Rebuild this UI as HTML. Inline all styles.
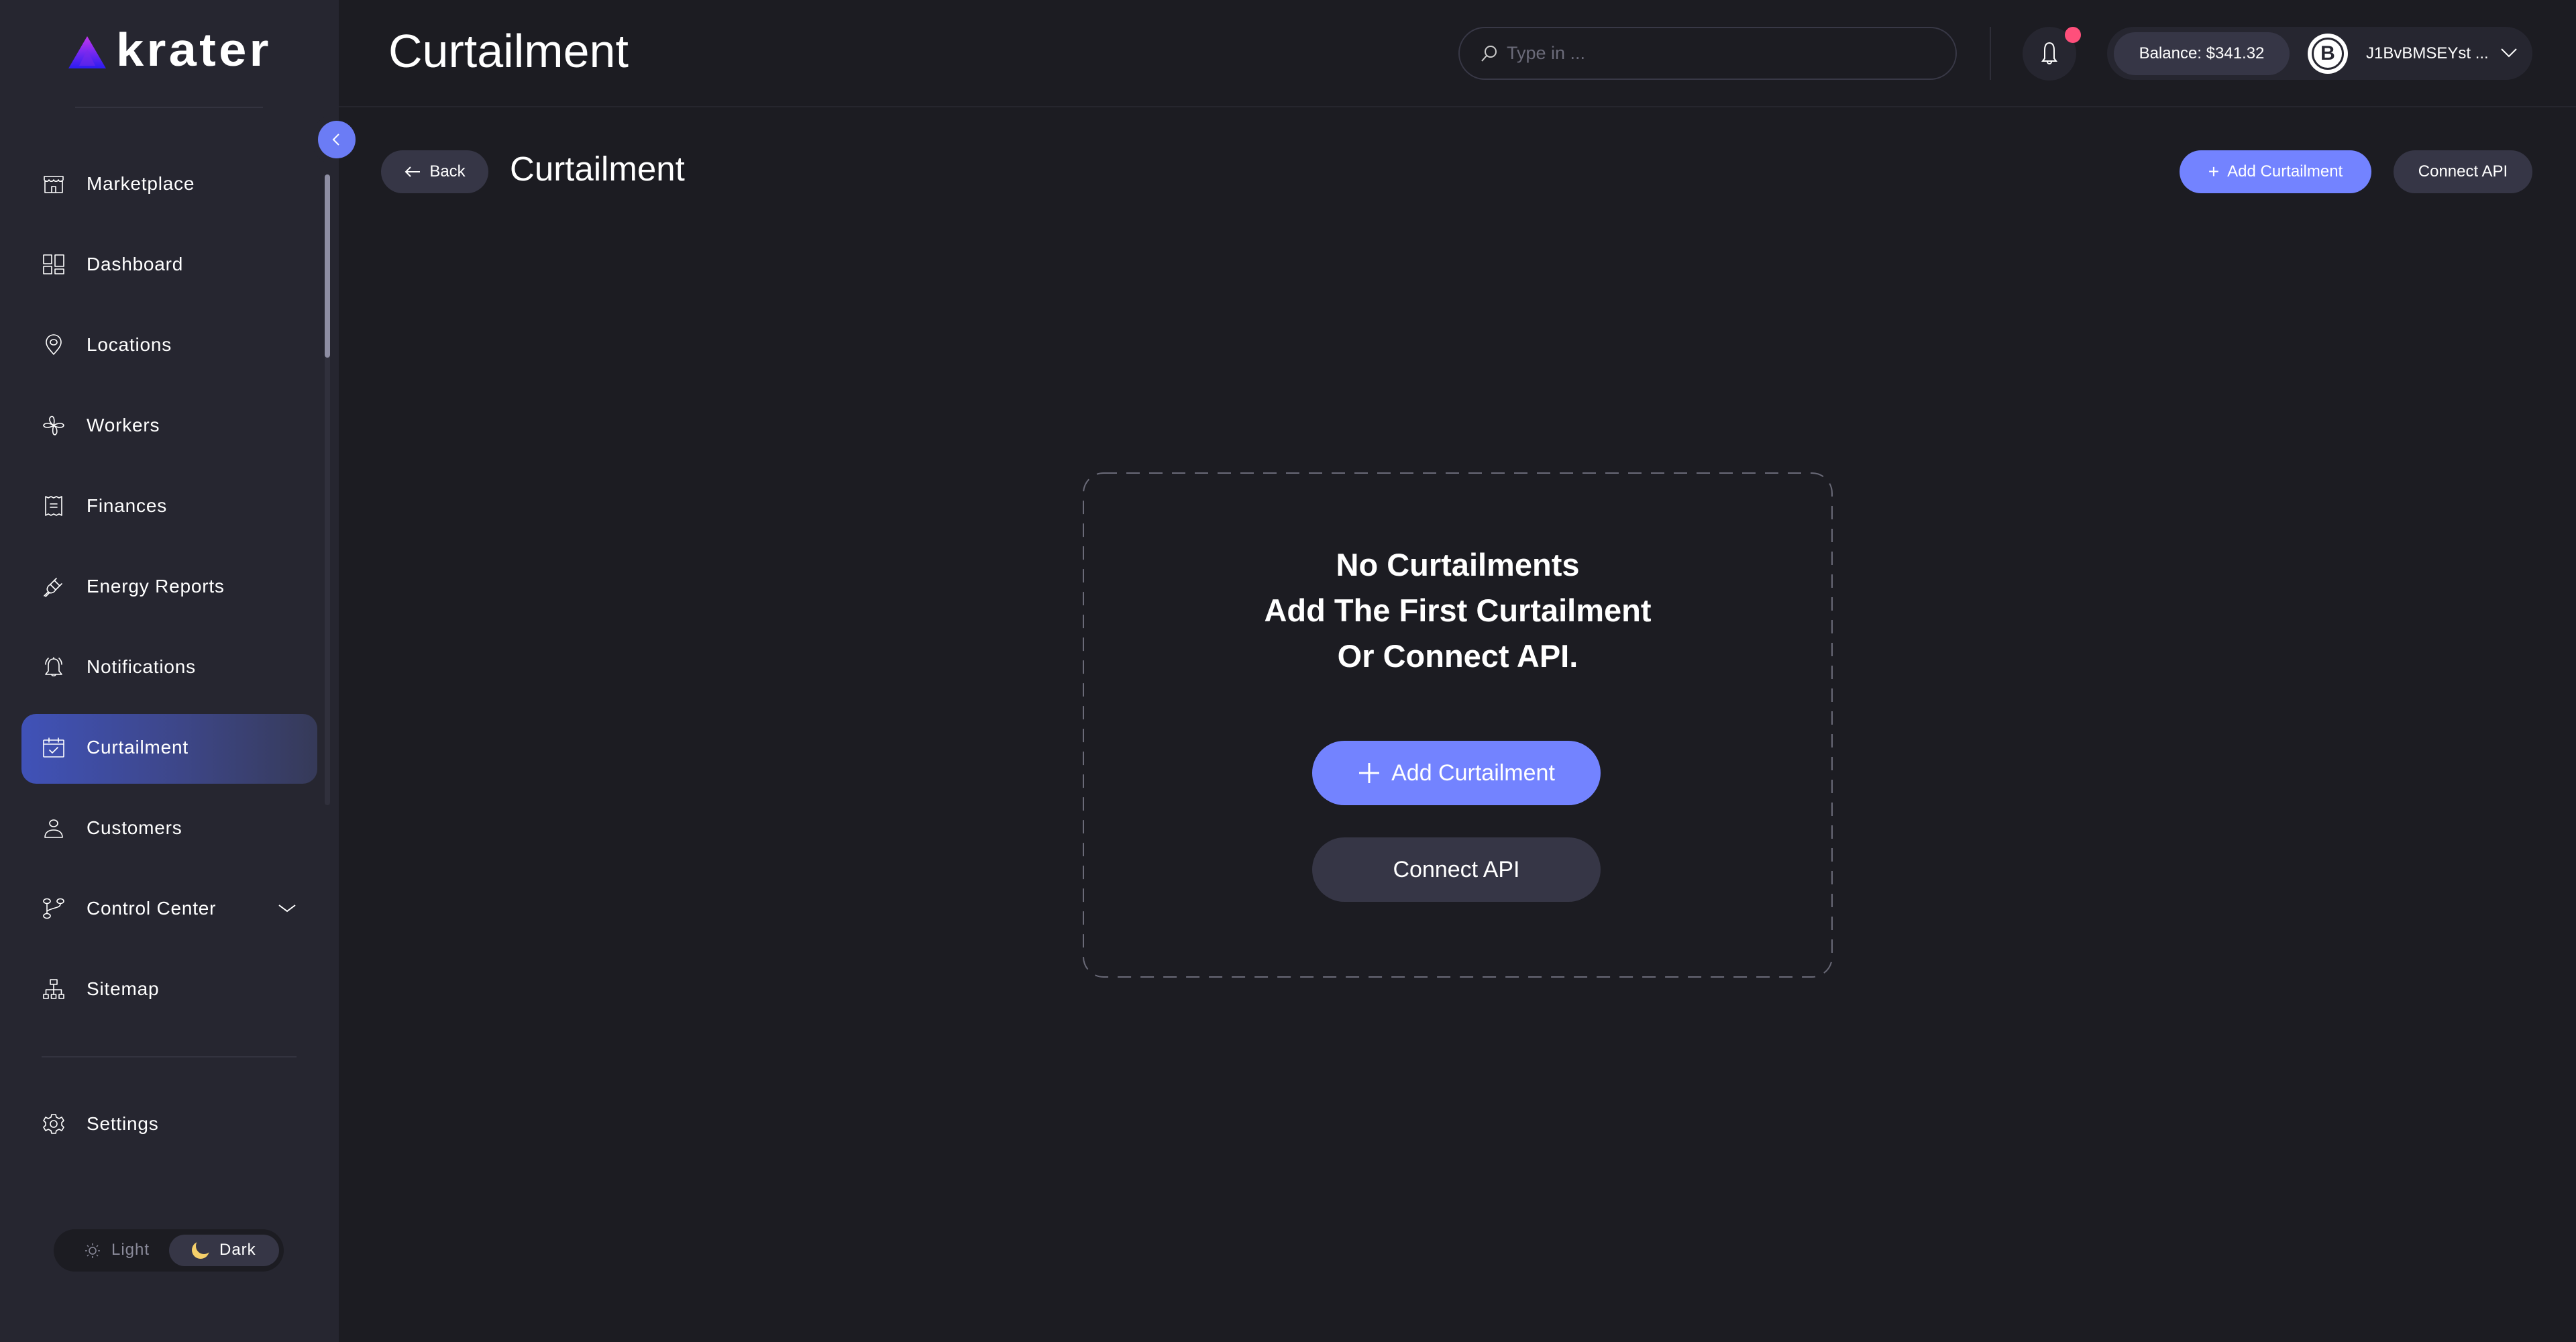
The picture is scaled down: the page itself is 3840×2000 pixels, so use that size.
<!DOCTYPE html>
<html><head><meta charset="utf-8"><style>
*{margin:0;padding:0;box-sizing:border-box}
body{width:3840px;height:2000px;background:#1c1c22;font-family:"Liberation Sans",sans-serif;color:#fff;position:relative;overflow:hidden}
.abs{position:absolute}
#side{left:0;top:0;width:505px;height:2000px;background:#262630}
.nav{position:absolute;left:64px;height:40px;display:flex;align-items:center;font-size:28px;letter-spacing:0.8px}
.nav svg{width:32px;height:32px;margin-right:33px;fill:none;stroke:#fff;stroke-width:1.6;stroke-linecap:round;stroke-linejoin:round}
.pill{position:absolute;border-radius:999px;display:flex;align-items:center;justify-content:center}
</style></head><body>
<div id="side" class="abs"></div>
<!-- logo -->
<svg class="abs" style="left:102px;top:54px" width="56" height="48" viewBox="0 0 56 48">
<defs><linearGradient id="lg" x1="0" y1="0" x2="0" y2="1"><stop offset="0" stop-color="#c436f0"/><stop offset="1" stop-color="#2a1cf0"/></linearGradient></defs>
<polygon points="28,0 56,48 0,48" fill="url(#lg)"/><polygon points="28,20 40,44 16,44" fill="#7a2ae8" opacity=".5"/></svg>
<div class="abs" style="left:173px;top:34px;font-size:70px;font-weight:bold;letter-spacing:4px;line-height:80px;transform:scaleX(1.06);transform-origin:left">krater</div>
<div class="abs" style="left:112px;top:159px;width:280px;height:2px;background:#33333f"></div>
<!-- scrollbar -->
<div class="abs" style="left:484px;top:260px;width:8px;height:940px;background:#30303c;border-radius:4px"></div>
<div class="abs" style="left:484px;top:260px;width:8px;height:273px;background:#8e8ea3;border-radius:4px"></div>
<!-- collapse -->
<div class="abs" style="left:464px;top:170px;width:76px;height:76px;border-radius:50%;background:#262630"></div>
<div class="abs" style="left:505px;top:159px;width:60px;height:100px;background:#1c1c22"></div>
<div class="abs" style="left:474px;top:180px;width:56px;height:56px;border-radius:50%;background:#6b7cf5"></div>
<svg class="abs" style="left:490px;top:196px" width="24" height="24" viewBox="0 0 24 24"><path d="M15 4 L7 12 L15 20" stroke="#fff" stroke-width="2" fill="none"/></svg>
<!-- active -->
<div class="abs" style="left:32px;top:1064px;width:441px;height:104px;border-radius:22px;background:linear-gradient(90deg,#4052b8,#3d4687 55%,#363a58)"></div>

<div class="nav" style="top:254px"><svg viewBox="0 0 32 32"><path d="M3 12V29H29V12M2 5H30V10C28 13 24 13 23 10C22 13 17 13 16 10C15 13 10 13 9 10C8 13 4 13 2 10ZM13 29V20H19V29"/></svg>Marketplace</div>
<div class="nav" style="top:374px"><svg viewBox="0 0 32 32"><rect x="1" y="2" width="12" height="13"/><rect x="18" y="2" width="13" height="17"/><rect x="1" y="19" width="12" height="11"/><rect x="18" y="23" width="13" height="7"/></svg>Dashboard</div>
<div class="nav" style="top:494px"><svg viewBox="0 0 32 32"><path d="M16 30C10 23 5 18 5 12A11 11 0 0 1 27 12C27 18 22 23 16 30Z"/><ellipse cx="16" cy="12" rx="5" ry="4"/></svg>Locations</div>
<div class="nav" style="top:614px"><svg viewBox="0 0 32 32"><path d="M16 16C10 12 8 6 12 3C16 1 18 7 16 16ZM16 16C22 12 30 12 31 16C30 20 22 20 16 16ZM16 16C22 20 22 28 18 30C14 30 14 22 16 16ZM16 16C10 20 2 20 1 16C2 12 10 12 16 16Z"/></svg>Workers</div>
<div class="nav" style="top:734px"><svg viewBox="0 0 32 32"><path d="M4 2L8 4L12 2L16 4L20 2L24 4L28 2V30L24 28L20 30L16 28L12 30L8 28L4 30ZM11 13H21M11 18H21"/></svg>Finances</div>
<div class="nav" style="top:854px"><svg viewBox="0 0 32 32"><path d="M2 30L8 24M4 31L9 26M8 24C5 21 6 16 11 13L19 21C16 26 11 27 8 24ZM11 13L20 4M19 21L28 12M14 10L17 7L25 15L22 18"/></svg>Energy Reports</div>
<div class="nav" style="top:974px"><svg viewBox="0 0 32 32"><path d="M16 4C10 4 8 9 8 14V22L4 27H28L24 22V14C24 9 22 4 16 4ZM13 27C13 30 19 30 19 27M16 4V2M4 12C4 8 6 5 8 3M28 12C28 8 26 5 24 3"/></svg>Notifications</div>
<div class="nav" style="top:1094px"><svg viewBox="0 0 32 32"><rect x="1" y="5" width="30" height="25" rx="1"/><path d="M1 11H31M9 2V8M23 2V8M10 20L14 24L22 16"/></svg>Curtailment</div>
<div class="nav" style="top:1214px"><svg viewBox="0 0 32 32"><ellipse cx="16" cy="9" rx="6" ry="5"/><path d="M3 30C3 22 9 19 16 19C23 19 29 22 29 30Z"/></svg>Customers</div>
<div class="nav" style="top:1334px"><svg viewBox="0 0 32 32"><ellipse cx="6" cy="5" rx="5" ry="3.5"/><ellipse cx="6" cy="27" rx="5" ry="3.5"/><ellipse cx="26" cy="5" rx="5" ry="3.5"/><path d="M6 9V23M26 9C26 16 14 14 6 20"/></svg>Control Center</div>
<svg class="abs" style="left:414px;top:1344px" width="28" height="20" viewBox="0 0 28 20"><path d="M2 5L14 14L26 5" stroke="#fff" stroke-width="2" fill="none"/></svg>
<div class="nav" style="top:1454px"><svg viewBox="0 0 32 32"><rect x="11" y="2" width="10" height="7"/><rect x="1" y="24" width="7" height="6"/><rect x="12.5" y="24" width="7" height="6"/><rect x="24" y="24" width="7" height="6"/><path d="M16 9V24M4.5 24V17H27.5V24"/></svg>Sitemap</div>
<div class="abs" style="left:62px;top:1574px;width:380px;height:2px;background:#33333f"></div>
<div class="nav" style="top:1655px"><svg viewBox="0 0 32 32"><circle cx="16" cy="16" r="5"/><path d="M13 2H19L20 6L24 8L28 6L31 11L28 14V18L31 21L28 26L24 24L20 26L19 30H13L12 26L8 24L4 26L1 21L4 18V14L1 11L4 6L8 8L12 6Z"/></svg>Settings</div>
<!-- theme toggle -->
<div class="pill" style="left:80px;top:1832px;width:343px;height:63px;background:#1c1c22"></div>
<svg class="abs" style="left:126px;top:1852px" width="24" height="24" viewBox="0 0 24 24" fill="none" stroke="#8a8a9a" stroke-width="1.5"><circle cx="12" cy="12" r="5"/><path d="M12 1V4M12 20V23M1 12H4M20 12H23M4 4L6 6M18 18L20 20M4 20L6 18M18 6L20 4"/></svg>
<div class="abs" style="left:166px;top:1849px;font-size:24px;color:#8a8a9a;letter-spacing:1px">Light</div>
<div class="pill" style="left:252px;top:1840px;width:164px;height:47px;background:#363646"></div>
<div class="abs" style="left:286px;top:1850px;width:26px;height:26px;border-radius:50%;background:#f5cf6a"></div>
<div class="abs" style="left:292px;top:1845px;width:24px;height:24px;border-radius:50%;background:#363646"></div>
<div class="abs" style="left:327px;top:1849px;font-size:24px;letter-spacing:1px">Dark</div>

<!-- header -->
<div class="abs" style="left:579px;top:36px;font-size:70px;line-height:80px">Curtailment</div>
<div class="abs" style="left:505px;top:158px;width:3335px;height:2px;background:#26262e"></div>
<div class="pill" style="left:2174px;top:40px;width:743px;height:79px;border:2px solid #383846;justify-content:flex-start;padding-left:30px">
<svg width="28" height="28" viewBox="0 0 28 28" fill="none" stroke="#ccc" stroke-width="2"><circle cx="16" cy="11" r="8"/><path d="M10 17L3 25"/></svg>
<span style="margin-left:12px;font-size:27px;color:#6b6b7a">Type in ...</span></div>
<div class="abs" style="left:2966px;top:40px;width:2px;height:79px;background:#2e2e38"></div>
<div class="abs" style="left:3015px;top:40px;width:80px;height:80px;border-radius:50%;background:#262630"></div>
<svg class="abs" style="left:3040px;top:60px" width="30" height="40" viewBox="0 0 30 40" fill="none" stroke="#fff" stroke-width="2"><path d="M15 4C9 4 8 10 8 15V27L5 31H25L22 27V15C22 10 21 4 15 4ZM12 32C12 36 18 36 18 32"/></svg>
<div class="abs" style="left:3078px;top:40px;width:24px;height:24px;border-radius:50%;background:#ff4f7b"></div>
<div class="pill" style="left:3141px;top:40px;width:634px;height:79px;background:#262630"></div>
<div class="pill" style="left:3151px;top:48px;width:262px;height:64px;background:#363646;font-size:24px">Balance: $341.32</div>
<div class="abs" style="left:3440px;top:50px;width:60px;height:60px;border-radius:50%;background:#fff"></div>
<div class="abs" style="left:3446px;top:56px;width:48px;height:48px;border-radius:50%;border:3px solid #262630;color:#262630;font-weight:bold;font-size:30px;text-align:center;line-height:42px">B</div>
<div class="abs" style="left:3527px;top:66px;font-size:24px">J1BvBMSEYst ...</div>
<svg class="abs" style="left:3726px;top:68px" width="28" height="22" viewBox="0 0 28 22"><path d="M3 5L14 16L25 5" stroke="#fff" stroke-width="2" fill="none"/></svg>

<!-- subheader -->
<div class="pill" style="left:568px;top:224px;width:160px;height:64px;background:#363646;font-size:24px"><svg width="26" height="20" viewBox="0 0 26 20" style="margin-right:12px"><path d="M24 10H3M10 3L3 10L10 17" stroke="#fff" stroke-width="2" fill="none"/></svg>Back</div>
<div class="abs" style="left:760px;top:222px;font-size:51px;line-height:60px">Curtailment</div>
<div class="pill" style="left:3249px;top:224px;width:286px;height:64px;background:#7383ff;font-size:24px"><span style="margin-right:12px;font-size:28px">+</span>Add Curtailment</div>
<div class="pill" style="left:3568px;top:224px;width:207px;height:64px;background:#363646;font-size:24px">Connect API</div>

<!-- empty state -->
<svg class="abs" style="left:1614px;top:704px" width="1118" height="753"><rect x="1" y="1" width="1116" height="751" rx="30" fill="none" stroke="#6a6a78" stroke-width="2" stroke-dasharray="20 14"/></svg>
<div class="abs" style="left:1614px;top:808px;width:1118px;text-align:center;font-size:47px;font-weight:bold;line-height:68px">No Curtailments<br>Add The First Curtailment<br>Or Connect API.</div>
<div class="pill" style="left:1956px;top:1104px;width:430px;height:96px;background:#7383ff;font-size:34px"><svg width="34" height="34" viewBox="0 0 34 34" style="margin-right:16px"><path d="M17 2V32M2 17H32" stroke="#fff" stroke-width="3"/></svg>Add Curtailment</div>
<div class="pill" style="left:1956px;top:1248px;width:430px;height:96px;background:#363646;font-size:34px">Connect API</div>
</body></html>
